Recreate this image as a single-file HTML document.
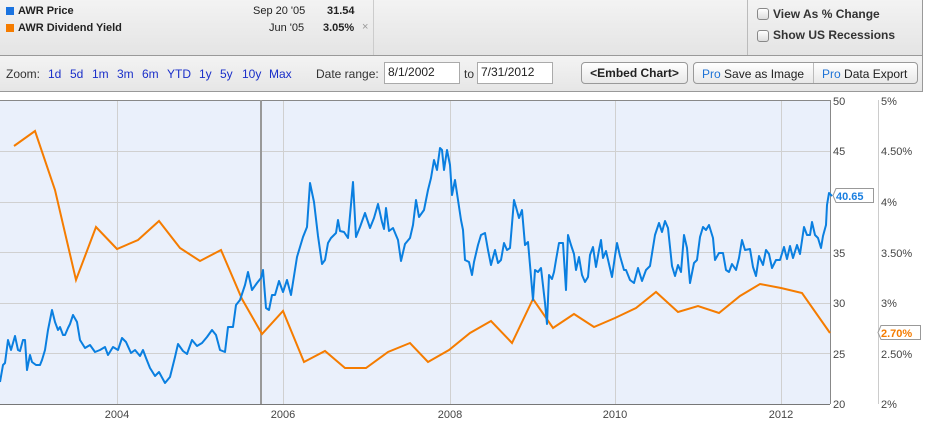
<!DOCTYPE html>
<html><head><meta charset="utf-8"><style>
*{margin:0;padding:0;box-sizing:border-box}
body{width:938px;height:435px;background:#fff;font-family:"Liberation Sans",Arial,sans-serif;position:relative;overflow:hidden}
.top{position:absolute;left:0;top:0;width:923px;height:56px;background:linear-gradient(#f3f3f3,#e4e4e4);border-bottom:1px solid #999;border-right:1px solid #999}
.tool{position:absolute;left:0;top:56px;width:923px;height:36px;background:linear-gradient(#f3f3f3,#e6e6e6);border-bottom:1px solid #999;border-right:1px solid #999}
.a{position:absolute;font-size:11px;color:#222;white-space:nowrap}
.b{font-weight:bold}
.sq{position:absolute;width:8px;height:8px}
.lk{color:#1a2fc9}
.inp{position:absolute;height:22px;background:#fff;border:1px solid #aaa;font-size:12px;padding:2px 3px;color:#222}
.btn{position:absolute;height:22px;border:1px solid #999;border-radius:4px;background:linear-gradient(#fff,#e8e8e8);font-size:12px;line-height:20px;text-align:center;color:#222}
.cb{position:absolute;width:12px;height:12px;border:1px solid #888;border-radius:3px;background:linear-gradient(#fff,#ddd)}
.pro{color:#1e73d6}
</style></head><body>
<div class="top"></div>
<div style="position:absolute;left:373px;top:0;width:1px;height:55px;background:#ccc"></div>
<div style="position:absolute;left:747px;top:0;width:1px;height:55px;background:#bbb"></div>
<div class="sq" style="left:6px;top:7px;background:#1a73e0"></div>
<div class="a b" style="left:18px;top:5px">AWR Price</div>
<div class="a" style="left:253px;top:5px">Sep 20 '05</div>
<div class="a b" style="left:327px;top:5px">31.54</div>
<div class="sq" style="left:6px;top:24px;background:#f57c00"></div>
<div class="a b" style="left:18px;top:22px">AWR Dividend Yield</div>
<div class="a" style="left:269px;top:22px">Jun '05</div>
<div class="a b" style="left:323px;top:22px">3.05%</div>
<div class="a" style="left:362px;top:21px;color:#999;font-size:11px">×</div>
<div class="cb" style="left:757px;top:8px"></div>
<div class="a b" style="left:773px;top:7px;font-size:12px;color:#333">View As % Change</div>
<div class="cb" style="left:757px;top:30px"></div>
<div class="a b" style="left:773px;top:28px;font-size:12px;color:#333">Show US Recessions</div>
<div class="tool"></div>
<div class="a" style="left:6px;top:67px;font-size:12px;color:#333">Zoom:</div>
<div class="a lk" style="left:48px;top:67px;font-size:12px">1d</div>
<div class="a lk" style="left:70px;top:67px;font-size:12px">5d</div>
<div class="a lk" style="left:92px;top:67px;font-size:12px">1m</div>
<div class="a lk" style="left:117px;top:67px;font-size:12px">3m</div>
<div class="a lk" style="left:142px;top:67px;font-size:12px">6m</div>
<div class="a lk" style="left:167px;top:67px;font-size:12px">YTD</div>
<div class="a lk" style="left:199px;top:67px;font-size:12px">1y</div>
<div class="a lk" style="left:220px;top:67px;font-size:12px">5y</div>
<div class="a lk" style="left:242px;top:67px;font-size:12px">10y</div>
<div class="a lk" style="left:269px;top:67px;font-size:12px">Max</div>
<div class="a" style="left:316px;top:67px;font-size:12px;color:#333">Date range:</div>
<div class="inp" style="left:384px;top:62px;width:76px">8/1/2002</div>
<div class="a" style="left:464px;top:67px;font-size:12px;color:#333">to</div>
<div class="inp" style="left:477px;top:62px;width:76px">7/31/2012</div>
<div class="btn b" style="left:581px;top:62px;width:107px">&lt;Embed Chart&gt;</div>
<div class="btn" style="left:693px;top:62px;width:225px"></div>
<div style="position:absolute;left:813px;top:63px;width:1px;height:20px;background:#bbb"></div>
<div class="a" style="left:702px;top:67px;font-size:12px"><span class="pro">Pro</span> Save as Image</div>
<div class="a" style="left:822px;top:67px;font-size:12px"><span class="pro">Pro</span> Data Export</div>

<svg style="position:absolute;left:0;top:0" width="938" height="435">
<rect x="0" y="100" width="830" height="304" fill="#eaf0fb"/>
<g stroke="#d0d0d0" stroke-width="1">
<line x1="0" y1="151.5" x2="830" y2="151.5"/><line x1="0" y1="202.5" x2="830" y2="202.5"/><line x1="0" y1="252.5" x2="830" y2="252.5"/><line x1="0" y1="303.5" x2="830" y2="303.5"/><line x1="0" y1="353.5" x2="830" y2="353.5"/>
<line x1="117.5" y1="100" x2="117.5" y2="404"/><line x1="283.5" y1="100" x2="283.5" y2="404"/><line x1="450.5" y1="100" x2="450.5" y2="404"/><line x1="615.5" y1="100" x2="615.5" y2="404"/><line x1="781.5" y1="100" x2="781.5" y2="404"/>
</g>
<line x1="0" y1="100.5" x2="830" y2="100.5" stroke="#888"/>
<line x1="0" y1="404.5" x2="830" y2="404.5" stroke="#777"/>
<line x1="830.5" y1="100" x2="830.5" y2="404" stroke="#888"/>
<line x1="878.5" y1="100" x2="878.5" y2="404" stroke="#ccc"/>
<line x1="261" y1="100" x2="261" y2="404" stroke="#999" stroke-width="2"/>
<polyline fill="none" stroke="#f57c00" stroke-width="2" points="14,146 35,131 55,190 76,280 96,227 117,249 138,240 159,221 180,248 200,261 221,250 242,299 262,334 283,311 304,362 325,351 345,368 366,368 388,352 410,343 428,362 449,350 470,333 491,321 512,343 533,299 553,328 574,314 594,327 615,318 636,308 656,292 678,312 698,306 719,313 740,296 760,284 781,288 802,293 830,333"/>
<polyline fill="none" stroke="#0a7fe0" stroke-width="2" stroke-linejoin="round" points="0,382 3,365 5,363 8,340 11,350 15,336 18,350 20,351 23,340 25,340 27,370 30,355 32,362 36,365 40,365 42,360 45,350 48,330 52,310 55,322 58,330 60,327 63,335 65,335 68,328 70,324 73,315 77,322 80,340 85,348 90,345 95,352 100,350 105,347 108,355 113,347 118,350 122,338 126,342 131,353 135,350 140,356 143,350 146,358 150,368 155,376 159,372 165,383 170,377 175,357 178,344 183,351 187,354 192,340 197,346 202,343 207,337 212,330 216,335 220,350 225,352 228,327 233,327 236,305 240,300 245,285 248,272 252,290 257,283 261,278 263,270 266,308 269,310 272,295 275,295 279,281 283,292 287,280 291,295 297,257 303,237 307,227 310,183 314,202 318,236 322,264 325,260 328,243 331,238 336,233 338,220 340,231 344,232 348,238 353,182 356,237 360,227 365,213 370,228 374,218 378,204 382,222 384,229 386,208 389,231 393,228 398,240 401,261 405,244 410,238 413,225 416,200 419,217 424,210 428,190 431,178 434,160 437,170 440,148 442,150 444,170 447,150 450,165 452,195 455,180 458,200 461,220 463,230 465,260 469,262 472,275 474,262 478,245 481,235 485,233 488,250 491,265 495,250 498,263 501,260 504,243 507,250 510,248 514,200 516,207 519,218 522,210 525,245 528,242 530,265 533,300 535,270 538,272 541,268 545,303 547,324 549,275 552,279 554,272 556,260 559,243 563,243 566,290 568,235 571,245 574,254 576,270 579,257 582,275 585,282 588,277 590,255 593,247 596,267 599,250 601,240 603,258 606,251 609,264 612,277 615,256 617,243 620,256 624,270 626,270 630,280 634,283 638,268 642,281 646,270 650,266 655,235 659,223 662,232 665,221 668,228 672,266 675,276 678,265 681,272 684,235 687,248 690,283 694,263 697,260 700,237 703,227 706,230 709,225 713,238 715,260 719,253 723,253 726,270 729,272 732,264 736,270 739,258 742,240 745,250 750,249 753,267 756,276 759,256 763,265 766,250 769,254 772,268 776,260 780,260 784,247 787,259 790,246 793,258 797,245 800,254 804,227 807,235 810,235 812,222 815,235 818,238 821,248 823,236 826,225 827,205 829,193 832,196"/>
<g font-family="Liberation Sans,Arial,sans-serif" font-size="11" fill="#444">
<text x="833" y="105">50</text><text x="833" y="155">45</text><text x="833" y="257">35</text><text x="833" y="307">30</text><text x="833" y="358">25</text><text x="833" y="408">20</text>
<text x="881" y="105">5%</text><text x="881" y="155">4.50%</text><text x="881" y="206">4%</text><text x="881" y="257">3.50%</text><text x="881" y="307">3%</text><text x="881" y="358">2.50%</text><text x="881" y="408">2%</text>
<text x="117" y="418" text-anchor="middle">2004</text><text x="283" y="418" text-anchor="middle">2006</text><text x="450" y="418" text-anchor="middle">2008</text><text x="615" y="418" text-anchor="middle">2010</text><text x="781" y="418" text-anchor="middle">2012</text>
</g>
<path d="M833,195.5 L836,188.5 H873.5 V202.5 H836 Z" fill="#fff" stroke="#999"/>
<text x="836" y="200" font-family="Liberation Sans,Arial,sans-serif" font-size="11" font-weight="bold" fill="#1a7fe0">40.65</text>
<path d="M878,332.5 L881,325.5 H920.5 V339.5 H881 Z" fill="#fff" stroke="#999"/>
<text x="881" y="337" font-family="Liberation Sans,Arial,sans-serif" font-size="11" font-weight="bold" fill="#f57c00">2.70%</text>
</svg>
</body></html>
